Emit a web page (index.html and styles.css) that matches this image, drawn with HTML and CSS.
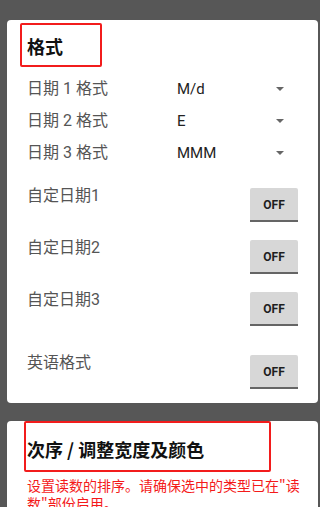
FILE: index.html
```html
<!DOCTYPE html>
<html lang="zh">
<head>
<meta charset="utf-8">
<link rel="stylesheet" href="styles.css">
</head>
<body>
<div class="page">
  <section class="card card-format">
    <h2 class="title title-format">格式</h2>
    <div class="select-row">
      <span class="label">日期 1 格式</span>
      <span class="value">M/d</span>
      <span class="arrow"></span>
    </div>
    <div class="select-row">
      <span class="label">日期 2 格式</span>
      <span class="value">E</span>
      <span class="arrow"></span>
    </div>
    <div class="select-row">
      <span class="label">日期 3 格式</span>
      <span class="value">MMM</span>
      <span class="arrow"></span>
    </div>

    <div class="switch-row first">
      <span class="label">自定日期1</span>
      <button class="toggle">OFF</button>
    </div>
    <div class="switch-row">
      <span class="label">自定日期2</span>
      <button class="toggle">OFF</button>
    </div>
    <div class="switch-row">
      <span class="label">自定日期3</span>
      <button class="toggle">OFF</button>
    </div>
    <div class="switch-row last">
      <span class="label">英语格式</span>
      <button class="toggle">OFF</button>
    </div>
  </section>

  <section class="card card-order">
    <h2 class="title title-order">次序 / 调整宽度及颜色</h2>
    <p class="note">设置读数的排序。请确保选中的类型已在"读数"部份启用。</p>
  </section>
</div>
</body>
</html>
```

FILE: styles.css
```css
html, body {
  margin: 0;
  padding: 0;
}

body {
  background: #575757;
  font-family: Roboto, "Noto Sans CJK SC", sans-serif;
  height: 507px;
  overflow: hidden;
}

.page {
  padding: 20px 2px 0 7px;
}

.card {
  background: #ffffff;
  border-radius: 4px;
}

.card-format {
  padding: 3px 20px 14px 13px;
}

.title {
  margin: 0;
  box-sizing: border-box;
  border: 2px solid #f21c1c;
  border-radius: 2px;
  color: #111;
  font-family: "Noto Sans CJK SC", sans-serif;
  font-weight: 700;
  display: flex;
  align-items: center;
}

.title-format {
  width: 82px;
  height: 44px;
  font-size: 18px;
  padding: 2px 0 0 5px;
}

.select-row {
  display: grid;
  grid-template-columns: 150px 1fr auto;
  align-items: center;
  height: 32px;
  padding-left: 7px;
}

.title-format + .select-row {
  margin-top: 6px;
}

.label {
  font-family: Roboto, "Noto Sans CJK SC", sans-serif;
  font-size: 16px;
  color: #555;
  line-height: 22px;
}

.value {
  font-family: Roboto, sans-serif;
  font-size: 15px;
  color: #222;
}

.arrow {
  width: 0;
  height: 0;
  border-left: 4px solid transparent;
  border-right: 4px solid transparent;
  border-top: 4px solid #666;
  margin-right: 14px;
}

.switch-row {
  display: flex;
  justify-content: space-between;
  align-items: flex-start;
  padding-left: 7px;
  margin-top: 15px;
}

.switch-row.first {
  margin-top: 16px;
}

.switch-row.last {
  margin-top: 26px;
}

.toggle {
  margin-top: 3px;
  width: 48px;
  height: 34px;
  box-sizing: border-box;
  border: none;
  border-radius: 2px 2px 0 0;
  border-bottom: 2px solid #656565;
  background: #d7d7d7;
  color: #1e1e1e;
  font-family: Roboto, sans-serif;
  font-weight: 700;
  font-size: 12px;
  padding: 2px 0 0;
}

.card-order {
  margin-top: 19px;
  padding: 0 20px 20px 17px;
  height: 120px;
}

.title-order {
  width: 247px;
  height: 51px;
  font-size: 18px;
  padding: 4px 0 0 1px;
  margin-top: -1px;
}

.note {
  margin: 4px -8px 0 3px;
  color: #f41a1a;
  font-family: "Noto Sans CJK SC", sans-serif;
  font-size: 14px;
  line-height: 18px;
}
```
